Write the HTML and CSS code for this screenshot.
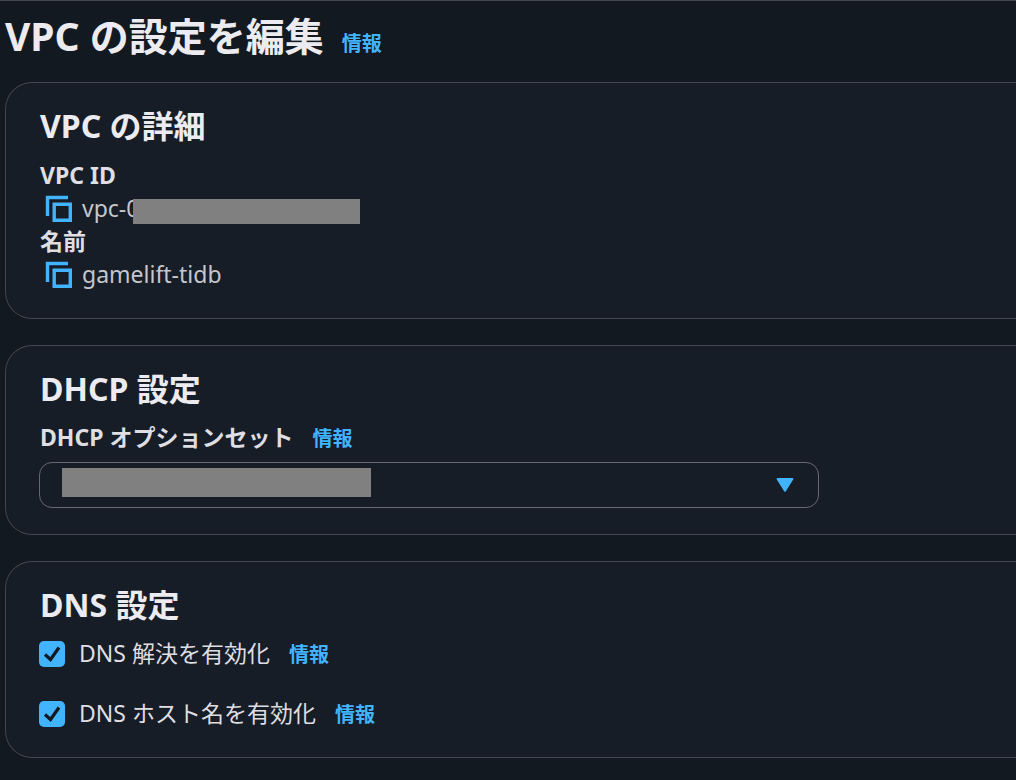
FILE: index.html
```html
<!DOCTYPE html>
<html lang="ja">
<head>
    <meta charset="UTF-8">
    <meta name="viewport" content="width=device-width, initial-scale=1.0">
    <title>VPC の設定を編集</title>
    <link rel="stylesheet" href="styles.css">
</head>
<body>
    <main class="page">
        <header class="page-header">
            <h1>VPC の設定を編集</h1>
            <a class="info" href="#">情報</a>
        </header>

        <form class="sections">
            <section class="card">
                <h2>VPC の詳細</h2>
                <dl class="details">
                    <dt>VPC ID</dt>
                    <dd>
                        <button class="copy" type="button" aria-label="VPC ID をコピー">
                            <svg width="28" height="28" viewBox="0 0 28 28" fill="none" stroke="currentColor" stroke-width="3.4">
                                <path d="M2.5 21V2.5H23" />
                                <path d="M9.2 9.2H25.3V25.3H9.2Z" />
                            </svg>
                        </button>
                        <span class="masked">vpc-0<span class="mask"></span></span>
                    </dd>
                    <dt>名前</dt>
                    <dd>
                        <button class="copy" type="button" aria-label="名前をコピー">
                            <svg width="28" height="28" viewBox="0 0 28 28" fill="none" stroke="currentColor" stroke-width="3.4">
                                <path d="M2.5 21V2.5H23" />
                                <path d="M9.2 9.2H25.3V25.3H9.2Z" />
                            </svg>
                        </button>
                        <span>gamelift-tidb</span>
                    </dd>
                </dl>
            </section>

            <section class="card">
                <h2>DHCP 設定</h2>
                <div class="field-label">
                    <label for="dhcpOptions">DHCP オプションセット</label>
                    <a class="info" href="#">情報</a>
                </div>
                <div class="select">
                    <select id="dhcpOptions" name="dhcpOptions">
                        <option value=""></option>
                    </select>
                    <span class="mask"></span>
                    <svg class="caret" width="18" height="16" viewBox="0 0 18 16">
                        <path d="M1.6 2H16.4L9 13.6Z" fill="currentColor" stroke="currentColor" stroke-width="2" stroke-linejoin="round" />
                    </svg>
                </div>
            </section>

            <section class="card">
                <h2>DNS 設定</h2>
                <div class="checks">
                    <div class="check">
                        <input type="checkbox" id="dnsSupport" name="dnsSupport" checked>
                        <label for="dnsSupport">DNS 解決を有効化</label>
                        <a class="info" href="#">情報</a>
                    </div>
                    <div class="check">
                        <input type="checkbox" id="dnsHostnames" name="dnsHostnames" checked>
                        <label for="dnsHostnames">DNS ホスト名を有効化</label>
                        <a class="info" href="#">情報</a>
                    </div>
                </div>
            </section>
        </form>
    </main>
</body>
</html>
```

FILE: styles.css
```css
* {
    box-sizing: border-box;
}

body {
    margin: 0;
    background-color: #131920;
    color: #dedee3;
    font-family: "Noto Sans", "Noto Sans CJK JP", sans-serif;
    font-size: 23px;
    line-height: 33px;
}

.page {
    border-top: 1px solid #424650;
    padding: 7px 0 20px 5px;
}

.page-header {
    display: flex;
    align-items: baseline;
    gap: 18px;
    margin-bottom: 18px;
}

h1, h2 {
    margin: 0;
    color: #ebebf0;
    font-weight: bold;
}

h1 {
    font-size: 39px;
    line-height: 56px;
}

h2 {
    font-size: 32px;
    line-height: 40px;
    margin-bottom: 12px;
}

.info {
    color: #42b4ff;
    font-size: 20px;
    font-weight: bold;
    text-decoration: none;
}

.sections {
    display: flex;
    flex-direction: column;
    gap: 26px;
}

.card {
    padding: 23px 34px 26px;
    background-color: #171d26;
    border: 1px solid #424650;
    border-right: none;
    border-radius: 27px 0 0 27px;
}

.details {
    margin: 0;
    padding: 1px 0;
}

.details dt {
    font-weight: bold;
}

.details dd {
    display: flex;
    align-items: center;
    gap: 9px;
    margin: 0;
    padding-left: 5px;
    color: #c6c6cd;
}

.copy {
    display: flex;
    padding: 0;
    border: none;
    background: none;
    color: #42b4ff;
    cursor: pointer;
}

.mask {
    position: absolute;
    background-color: #808080;
}

.masked {
    position: relative;
}

.masked .mask {
    top: 7px;
    left: 51px;
    width: 227px;
    height: 25px;
}

.field-label {
    display: flex;
    align-items: baseline;
    gap: 19px;
    margin-bottom: 7px;
    font-weight: bold;
}

.select {
    position: relative;
    max-width: 780px;
    margin-left: -1px;
}

.select select {
    display: block;
    width: 100%;
    height: 46px;
    padding: 0 60px 0 22px;
    appearance: none;
    background-color: transparent;
    border: 1px solid #656871;
    border-radius: 13px;
    color: inherit;
    font: inherit;
}

.select .mask {
    top: 6px;
    left: 23px;
    width: 309px;
    height: 29px;
}

.caret {
    position: absolute;
    top: 15px;
    right: 25px;
    color: #42b4ff;
    pointer-events: none;
}

.checks {
    display: flex;
    flex-direction: column;
    gap: 26px;
    margin-left: -1px;
}

.check {
    display: flex;
    align-items: baseline;
}

.check input {
    align-self: center;
    width: 26px;
    height: 26px;
    margin: 0 14px 0 0;
    appearance: none;
    border-radius: 5px;
    border: 2px solid #8c8c94;
}

.check input:checked {
    border: none;
    background: #42b4ff url("data:image/svg+xml,%3Csvg xmlns='http://www.w3.org/2000/svg' viewBox='0 0 26 26'%3E%3Cpath d='M6 13.5L11.5 18.5L20 6.5' fill='none' stroke='%23131920' stroke-width='3.2'/%3E%3C/svg%3E") center / 26px;
}

.check label {
    margin-right: 19px;
}
```
